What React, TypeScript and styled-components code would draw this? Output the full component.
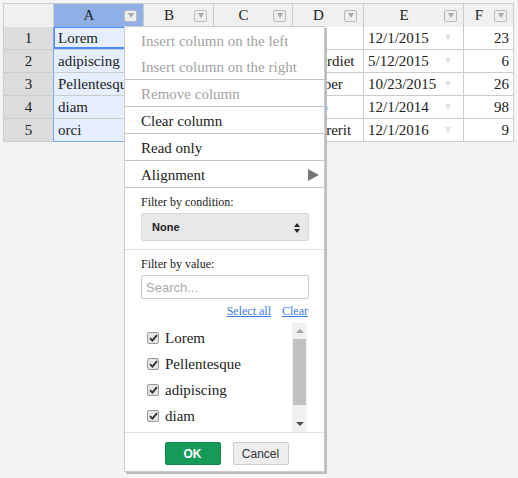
import React from 'react';
import styled, { createGlobalStyle } from 'styled-components';

const GlobalStyle = createGlobalStyle`
  html, body {
    margin: 0;
    padding: 0;
    background: #f3f4f6;
  }
  * {
    box-sizing: border-box;
  }
`;

const Page = styled.div`
  position: relative;
  width: 518px;
  height: 478px;
  padding: 3px 0 0 3px;
  font-family: "Liberation Serif", "Times New Roman", serif;
  color: #222;
`;

const Grid = styled.div`
  display: grid;
  grid-template-columns: 50px 90px 70px 79px 71px 100px 50px;
  grid-auto-rows: 23px;
  width: 511px;
  border-left: 1px solid #ccc;
  border-top: 1px solid #ccc;
  background: #fff;
  font-size: 15px;
`;

const HeadCell = styled.div<{ $active?: boolean }>`
  height: 24px;
  display: flex;
  align-items: center;
  background: ${p => (p.$active ? '#8eb0e7' : '#f0f0f0')};
  border-right: 1px solid #ccc;
  border-bottom: 1px solid #ccc;
  overflow: hidden;
`;

const HeadLabel = styled.span`
  flex: 1;
  text-align: center;
  line-height: 23px;
`;

const HeadButton = styled.span`
  width: 13px;
  height: 12px;
  margin-right: 6px;
  border: 1px solid #bbb;
  border-radius: 2px;
  background: #eee;
  display: flex;
  align-items: center;
  justify-content: center;

  &::after {
    content: '';
    border-left: 3px solid transparent;
    border-right: 3px solid transparent;
    border-top: 5px solid #aaa;
  }
`;

const RowHead = styled.div<{ $edge?: boolean }>`
  background: #dcdcdc;
  border-right: 1px solid ${p => (p.$edge ? '#7ea6ef' : '#ccc')};
  border-bottom: 1px solid #ccc;
  text-align: center;
  line-height: 22px;
`;

const Cell = styled.div<{ $selected?: boolean; $current?: boolean; $right?: boolean; $last?: boolean }>`
  position: relative;
  display: flex;
  align-items: center;
  justify-content: ${p => (p.$right ? 'flex-end' : 'space-between')};
  padding: 0 4px;
  white-space: nowrap;
  overflow: hidden;
  background: ${p => (p.$selected ? '#e6efff' : '#fff')};
  border-right: 1px solid #ccc;
  border-bottom: 1px solid ${p => (p.$selected && p.$last ? '#7ea6ef' : '#ccc')};

  ${p =>
    p.$current &&
    `
    &::before {
      content: '';
      position: absolute;
      left: -1px;
      top: -1px;
      right: 0;
      bottom: 0;
      border: 2px solid #4b89ff;
      pointer-events: none;
    }
  `}
`;

const DimArrow = styled.span`
  width: 0;
  height: 0;
  margin-right: 8px;
  border-left: 3px solid transparent;
  border-right: 3px solid transparent;
  border-top: 6px solid #e2e2e2;
`;

const Menu = styled.div`
  position: absolute;
  left: 124px;
  top: 26px;
  width: 201px;
  background: #fff;
  border: 1px solid #ccc;
  box-shadow: 2px 2px 0 #bcbcbc;
  font-family: "Liberation Serif", "Times New Roman", serif;
`;

const Item = styled.div<{ $disabled?: boolean }>`
  position: relative;
  height: 26px;
  padding: 3px 0 0 16px;
  line-height: 23px;
  font-size: 15px;
  color: ${p => (p.$disabled ? '#a3a3a3' : '#222')};
`;

const SubArrow = styled.span`
  position: absolute;
  right: 5px;
  top: 8px;
  border-left: 11px solid #777;
  border-top: 6px solid transparent;
  border-bottom: 6px solid transparent;
`;

const Separator = styled.div`
  height: 1px;
  background: #c4c4c4;
`;

const Section = styled.div<{ $dotted?: boolean }>`
  padding: 6px 0 8px 16px;
  border-top: ${p => (p.$dotted ? '1px dotted #c8c8c8' : 'none')};
`;

const Label = styled.div`
  font-size: 12px;
  line-height: 16px;
  margin-bottom: 3px;
`;

const SelectBox = styled.div`
  position: relative;
  width: 168px;
  height: 28px;
  display: flex;
  align-items: center;
  padding-left: 10px;
  background: #e8e8e8;
  border: 1px solid #d8d8d8;
  border-radius: 2px;
  font-family: "Liberation Sans", Arial, sans-serif;
  font-size: 11px;
  font-weight: bold;
  color: #222;
`;

const Spinner = styled.span`
  position: absolute;
  right: 8px;
  top: 9px;
  display: flex;
  flex-direction: column;
  gap: 2px;

  &::before,
  &::after {
    content: '';
    border-left: 3px solid transparent;
    border-right: 3px solid transparent;
  }
  &::before {
    border-bottom: 4px solid #222;
  }
  &::after {
    border-top: 4px solid #222;
  }
`;

const SearchInput = styled.input`
  display: block;
  width: 168px;
  height: 24px;
  margin-top: 1px;
  padding: 0 4px;
  border: 1px solid #ccc;
  border-radius: 2px;
  font-family: "Liberation Sans", Arial, sans-serif;
  font-size: 13px;
  color: #222;
  outline: none;

  &::placeholder {
    color: #aaa;
  }
`;

const Links = styled.div`
  width: 168px;
  display: flex;
  justify-content: flex-end;
  gap: 11px;
  margin-top: 4px;
  margin-bottom: 4px;
  padding-right: 1px;
  font-family: "Liberation Serif", "Times New Roman", serif;
  font-size: 12px;
  line-height: 16px;
`;

const Link = styled.a`
  color: #3d7be0;
  text-decoration: underline;
`;

const ListBox = styled.div`
  width: 168px;
  height: 109px;
  display: flex;
  margin-bottom: -8px;
`;

const List = styled.div`
  flex: 1;
  padding: 2px 0 0 6px;
  overflow: hidden;
`;

const ListItem = styled.div`
  height: 26px;
  display: flex;
  align-items: center;
  gap: 6px;
  font-size: 15px;
`;

const Check = styled.span`
  width: 12px;
  height: 12px;
  border: 1px solid #9a9a9a;
  border-radius: 2px;
  background: #e6e6e6;
  display: flex;
  align-items: center;
  justify-content: center;
`;

const ScrollBar = styled.div`
  width: 15px;
  margin-right: 2px;
  background: #f1f1f1;
  display: flex;
  flex-direction: column;
  align-items: center;
`;

const ScrollUp = styled.span`
  margin-top: 6px;
  border-left: 4px solid transparent;
  border-right: 4px solid transparent;
  border-bottom: 4px solid #a3a3a3;
`;

const ScrollThumb = styled.span`
  width: 13px;
  height: 66px;
  margin-top: 6px;
  background: #c1c1c1;
`;

const ScrollDown = styled.span`
  margin-top: auto;
  margin-bottom: 6px;
  border-left: 4px solid transparent;
  border-right: 4px solid transparent;
  border-top: 4px solid #505050;
`;

const Buttons = styled.div`
  display: flex;
  justify-content: center;
  gap: 12px;
  padding: 9px 0 6px 4px;
  border-top: 1px dotted #c8c8c8;
`;

const Button = styled.button<{ $primary?: boolean }>`
  width: 56px;
  height: 23px;
  padding: 0;
  border-radius: 2px;
  border: 1px solid ${p => (p.$primary ? '#0f8a4e' : '#ccc')};
  background: ${p => (p.$primary ? '#159a58' : '#eee')};
  color: ${p => (p.$primary ? '#fff' : '#333')};
  font-family: "Liberation Sans", Arial, sans-serif;
  font-size: 12px;
  font-weight: ${p => (p.$primary ? 'bold' : 'normal')};
`;

const columns = ['A', 'B', 'C', 'D', 'E', 'F'];

const rows = [
  ['Lorem', 'ipsum', 'dolor', 'sit', '12/1/2015', '23'],
  ['adipiscing', 'elit', 'Ut', 'imperdiet', '5/12/2015', '6'],
  ['Pellentesque', 'vulputate', 'nunc', 'Semper', '10/23/2015', '26'],
  ['diam', 'nunc', 'sit', 'Justo', '12/1/2014', '98'],
  ['orci', 'mattis', 'eget', 'hendrerit', '12/1/2016', '9'],
];

const values = ['Lorem', 'Pellentesque', 'adipiscing', 'diam', 'orci'];

const CheckMark = () => (
  <svg width="9" height="8" viewBox="0 0 9 8">
    <path d="M1 4.2 L3.4 6.6 L8 1.2" fill="none" stroke="#333" strokeWidth="1.9" />
  </svg>
);

export default function App() {
  return (
    <Page>
      <GlobalStyle />
      <Grid>
        <HeadCell />
        {columns.map((c, i) => (
          <HeadCell key={c} $active={i === 0}>
            <HeadLabel>{c}</HeadLabel>
            <HeadButton />
          </HeadCell>
        ))}
        {rows.map((r, ri) => (
          <React.Fragment key={ri}>
            <RowHead $edge>{ri + 1}</RowHead>
            {r.map((v, ci) => (
              <Cell
                key={ci}
                $selected={ci === 0}
                $current={ci === 0 && ri === 0}
                $last={ri === rows.length - 1}
                $right={ci === 5}
              >
                <span>{v}</span>
                {ci === 4 && <DimArrow />}
              </Cell>
            ))}
          </React.Fragment>
        ))}
      </Grid>

      <Menu>
        <Item $disabled>Insert column on the left</Item>
        <Item $disabled>Insert column on the right</Item>
        <Separator />
        <Item $disabled>Remove column</Item>
        <Separator />
        <Item>Clear column</Item>
        <Separator />
        <Item>Read only</Item>
        <Separator />
        <Item>
          Alignment
          <SubArrow />
        </Item>
        <Separator />
        <Section>
          <Label>Filter by condition:</Label>
          <SelectBox>
            None
            <Spinner />
          </SelectBox>
        </Section>
        <Section $dotted>
          <Label>Filter by value:</Label>
          <SearchInput placeholder="Search..." readOnly />
          <Links>
            <Link>Select all</Link>
            <Link>Clear</Link>
          </Links>
          <ListBox>
            <List>
              {values.map(v => (
                <ListItem key={v}>
                  <Check>
                    <CheckMark />
                  </Check>
                  {v}
                </ListItem>
              ))}
            </List>
            <ScrollBar>
              <ScrollUp />
              <ScrollThumb />
              <ScrollDown />
            </ScrollBar>
          </ListBox>
        </Section>
        <Buttons>
          <Button $primary>OK</Button>
          <Button>Cancel</Button>
        </Buttons>
      </Menu>
    </Page>
  );
}
